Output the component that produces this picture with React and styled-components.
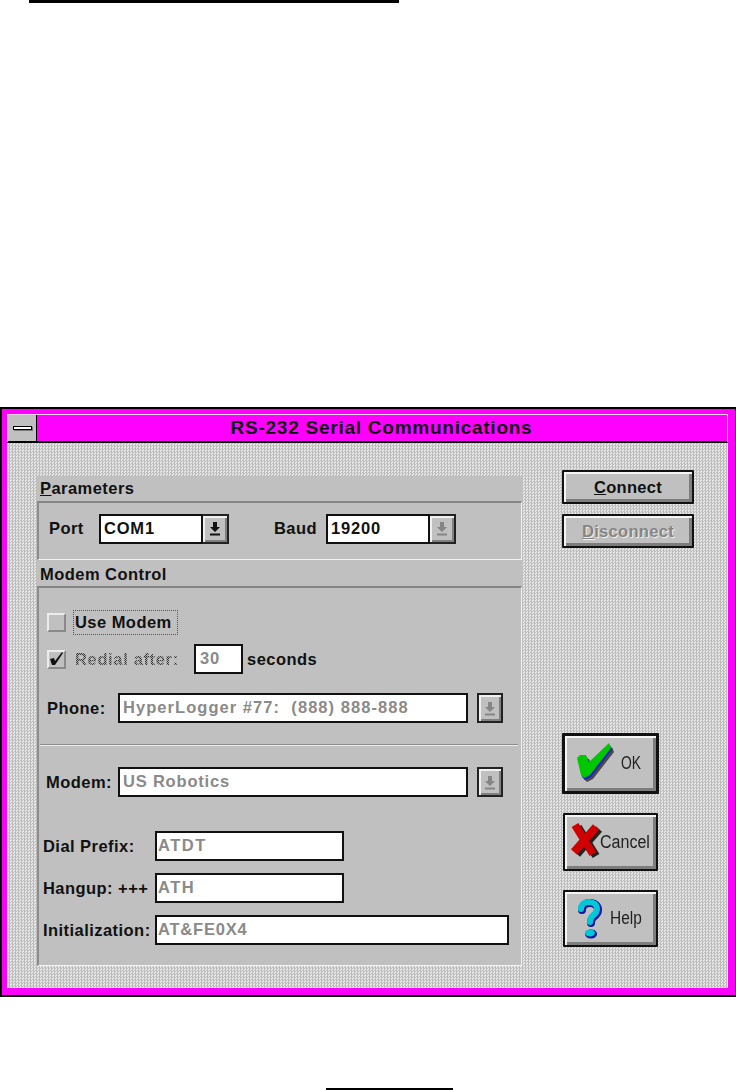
import React from "react";
import styled, { createGlobalStyle } from "styled-components";

const Global = createGlobalStyle`
    html, body {
        margin: 0;
        padding: 0;
        background: #fff;
    }
`;

const Page = styled.div`
    width: 736px;
    height: 1090px;
    overflow: hidden;
    display: flex;
    flex-direction: column;
    font-family: "Liberation Sans", Arial, sans-serif;
`;

const TopRule = styled.div`
    width: 370px;
    height: 3px;
    margin-left: 29px;
    background: #000;
`;

const BottomRule = styled.div`
    width: 127px;
    height: 2px;
    margin: 91px 0 0 326px;
    background: #000;
`;

const Window = styled.div`
    box-sizing: border-box;
    width: 736px;
    height: 590px;
    margin-top: 404px;
    padding: 5px 7px 7px 5px;
    border: 2px solid #000;
    border-right-width: 1px;
    background: #ff00ff;
    display: flex;
    flex-direction: column;
`;

const TitleBar = styled.div`
    height: 29px;
    flex: none;
    display: flex;
    border: 1px solid #f4d8f4;
    border-bottom: 2px solid #000;
    border-right-color: #f4d8f4;
    box-sizing: border-box;
`;

const SysBox = styled.div`
    width: 29px;
    flex: none;
    box-sizing: border-box;
    background: #c0c0c0;
    border-right: 1px solid #000;
    display: flex;
    align-items: center;
    justify-content: center;
`;

const SysDash = styled.div`
    width: 19px;
    height: 4px;
    box-sizing: border-box;
    background: #fff;
    border: 1px solid #000;
    box-shadow: 1px 1px 0 #777;
`;

const Title = styled.div`
    flex: 1;
    text-align: center;
    font-size: 19px;
    line-height: 26px;
    font-weight: bold;
    color: #111;
    padding-right: 1px;
    letter-spacing: 0.75px;
`;

const Body = styled.div`
    flex: 1;
    display: flex;
    padding: 33px 0 0 29px;
    background-color: #cfcfcf;
    background-image: repeating-conic-gradient(#bdbdbd 0 25%, #e6e6e6 0 50%);
    background-size: 3px 3px;
    border-left: 1px solid #f4f4f4;
    border-right: 1px solid #f4f4f4;
`;

const LeftCol = styled.div`
    width: 486px;
    flex: none;
    display: flex;
    flex-direction: column;
`;

const RightCol = styled.div`
    margin-left: 39px;
    width: 133px;
    display: flex;
    flex-direction: column;
    align-items: flex-start;
    margin-top: -6px;
`;

const GroupHead = styled.div`
    box-sizing: border-box;
    height: ${(p) => p.$h}px;
    padding: ${(p) => p.$pt || 0}px 0 0 3px;
    background: #c0c0c0;
    font-size: 16.5px;
    font-weight: bold;
    line-height: ${(p) => p.$h - (p.$pt || 0)}px;
    color: #111;
    letter-spacing: 0.45px;
`;

const GroupPanel = styled.div`
    box-sizing: border-box;
    width: 485px;
    height: ${(p) => p.$h}px;
    background: #c0c0c0;
    border-top: 2px solid #858585;
    border-left: 2px solid #8c8c8c;
    border-bottom: 1px solid #f2f2f2;
    border-right: 1px solid #f2f2f2;
    display: flex;
    flex-direction: column;
`;

const Row = styled.div`
    display: flex;
    align-items: center;
    height: ${(p) => p.$h}px;
    margin-top: ${(p) => p.$top || 0}px;
    padding-left: ${(p) => p.$left || 0}px;
`;

const Label = styled.span`
    box-sizing: border-box;
    width: ${(p) => (p.$w ? p.$w + "px" : "auto")};
    margin-left: ${(p) => p.$ml || 0}px;
    flex: none;
    font-size: 16.5px;
    font-weight: bold;
    color: #111;
    white-space: nowrap;
    letter-spacing: 0.45px;
`;

const Field = styled.div`
    box-sizing: border-box;
    width: ${(p) => p.$w}px;
    height: 30px;
    flex: none;
    margin-left: ${(p) => p.$ml || 0}px;
    padding-left: ${(p) => p.$pad || 3}px;
    background: #fff;
    border: 2px solid #111;
    font-size: 16.5px;
    font-weight: bold;
    line-height: 24px;
    letter-spacing: ${(p) => p.$ls || 0.8}px;
    color: ${(p) => (p.$dim ? "#8a8a8a" : "#111")};
    white-space: nowrap;
    overflow: hidden;
`;

const Combo = styled.div`
    display: flex;
    flex: none;
`;

const ArrowBtn = styled.div`
    box-sizing: border-box;
    width: 26px;
    height: 30px;
    flex: none;
    margin-left: ${(p) => p.$gap || 0}px;
    background: #c0c0c0;
    border: 2px solid #222;
    border-left-width: ${(p) => (p.$gap ? 2 : 0)}px;
    box-shadow: inset 2px 2px 0 #f0f0f0, inset -2px -2px 0 #808080;
    display: flex;
    align-items: center;
    justify-content: center;
`;

const CheckBox = styled.div`
    box-sizing: border-box;
    width: 19px;
    height: 19px;
    flex: none;
    background: #c0c0c0;
    border: 2px solid #ececec;
    border-right-color: #8a8a8a;
    border-bottom-color: #8a8a8a;
    display: flex;
    align-items: center;
    justify-content: center;
`;

const FocusLabel = styled(Label)`
    width: 105px;
    margin-left: 7px;
    padding: 3px 2px;
    outline: 1px dotted #555;
    outline-offset: -1px;
`;

const DisabledLabel = styled(Label)`
    width: 103px;
    margin-left: 9px;
    color: transparent;
    background-image: repeating-conic-gradient(#333 0 25%, #a8a8a8 0 50%);
    background-size: 2px 2px;
    -webkit-background-clip: text;
    background-clip: text;
    letter-spacing: 0.65px;
`;

const Separator = styled.div`
    height: 2px;
    margin: 21px 3px 0 1px;
    background: linear-gradient(#8c8c8c 50%, #ededed 50%);
`;

const PushButton = styled.div`
    box-sizing: border-box;
    width: ${(p) => p.$w}px;
    height: ${(p) => p.$h}px;
    margin-top: ${(p) => p.$top || 0}px;
    margin-left: ${(p) => p.$left || 0}px;
    background: #c0c0c0;
    border: ${(p) => (p.$default ? 3 : 2)}px solid #111;
    border-radius: 1px;
    box-shadow: inset 2px 2px 0 #f4f4f4, inset -3px -3px 0 #7d7d7d;
    display: flex;
    align-items: center;
    justify-content: ${(p) => p.$justify || "center"};
    padding-left: ${(p) => p.$pad || 0}px;
    font-size: 16.5px;
    font-weight: bold;
    letter-spacing: 0.3px;
    color: ${(p) => (p.$off ? "#858585" : "#111")};
    text-shadow: ${(p) => (p.$off ? "1px 1px 0 #eee" : "none")};
    white-space: nowrap;
`;

const Caption = styled.span`
    display: inline-block;
    flex: none;
    margin-left: ${(p) => p.$ml || 0}px;
    font-size: 18px;
    font-weight: normal;
    letter-spacing: 0;
    color: #222;
    transform: scaleX(${(p) => p.$sx});
    transform-origin: left center;
`;

const DownArrow = ({ dim }) => (
    <svg width="12" height="15" viewBox="0 0 12 15">
        <path d="M4 1h4v5h3L6 11 1 6h3z" fill={dim ? "#858585" : "#111"} />
        <rect x="1" y="12.5" width="10" height="2" fill={dim ? "#858585" : "#111"} />
    </svg>
);

const CheckMark = () => (
    <svg width="14" height="14" viewBox="0 0 14 14">
        <path d="M0 7l4-1 1 3 7-9 1 1-8 12H2z" fill="#111" />
    </svg>
);

const OkIcon = () => (
    <svg width="40" height="41" viewBox="0 0 40 41" style={{ flex: "none" }}>
        <path d="M1 15l3-3h6l3 7L33 0l2 5-21 27-6 3-3-3z" fill="#4a4a4a" transform="translate(3 4)" />
        <path d="M1 15l3-3h6l3 7L33 0l2 5-21 27-6 3-3-3z" fill="#1a22c8" transform="translate(1 2)" />
        <path d="M1 15l3-3h6l3 7L33 0l2 5-21 27-6 3-3-3z" fill="#00c800" />
    </svg>
);

const CancelIcon = () => (
    <svg width="34" height="40" viewBox="0 0 34 40" style={{ flex: "none" }}>
        <g fill="none" stroke="#222" strokeWidth="8" transform="translate(3 2)">
            <path d="M5 3l18 29" />
            <path d="M26 5L4 30" />
        </g>
        <g fill="none" stroke="#d00000" strokeWidth="8">
            <path d="M5 3l18 29" />
            <path d="M26 5L4 30" />
        </g>
    </svg>
);

const HelpIcon = () => (
    <svg width="26" height="42" viewBox="0 0 26 42" style={{ flex: "none" }}>
        <path
            d="M5 12c0-5 4-7 8-7 5 0 8 3 8 7 0 3-2 5-4 6.500-2 1.500-3 3-3 6.500"
            fill="none"
            stroke="#14149a"
            strokeWidth="8"
            strokeLinecap="round"
        />
        <ellipse cx="14" cy="36" rx="6" ry="4.500" fill="#14149a" />
        <path
            d="M4 11c0-5 4-7 8-7 5 0 8 3 8 7 0 3-2 5-4 6.500-2 1.500-3 3-3 6.500"
            fill="none"
            stroke="#00c8d8"
            strokeWidth="6"
            strokeLinecap="round"
        />
        <ellipse cx="13" cy="35" rx="5" ry="3.500" fill="#00c8d8" />
    </svg>
);

export default function App() {
    return (
        <Page>
            <Global />
            <TopRule />
            <Window>
                <TitleBar>
                    <SysBox>
                        <SysDash />
                    </SysBox>
                    <Title>RS-232 Serial Communications</Title>
                </TitleBar>
                <Body>
                    <LeftCol>
                        <GroupHead $h={25}>
                            <u>P</u>arameters
                        </GroupHead>
                        <GroupPanel $h={59}>
                            <Row $h={51} $left={10}>
                                <Label $w={50}>Port</Label>
                                <Combo>
                                    <Field $w={104}>COM1</Field>
                                    <ArrowBtn>
                                        <DownArrow />
                                    </ArrowBtn>
                                </Combo>
                                <Label $w={52} $ml={45}>
                                    Baud
                                </Label>
                                <Combo>
                                    <Field $w={104}>19200</Field>
                                    <ArrowBtn>
                                        <DownArrow dim />
                                    </ArrowBtn>
                                </Combo>
                            </Row>
                        </GroupPanel>
                        <GroupHead $h={26} $pt={3}>
                            Modem Control
                        </GroupHead>
                        <GroupPanel $h={380}>
                            <Row $h={24} $top={22} $left={8}>
                                <CheckBox />
                                <FocusLabel>Use Modem</FocusLabel>
                            </Row>
                            <Row $h={30} $top={10} $left={8}>
                                <CheckBox>
                                    <CheckMark />
                                </CheckBox>
                                <DisabledLabel>Redial after:</DisabledLabel>
                                <Field $w={49} $pad={4} $dim $ml={16}>
                                    30
                                </Field>
                                <Label $ml={4}>seconds</Label>
                            </Row>
                            <Row $h={30} $top={19} $left={8}>
                                <Label $w={71}>Phone:</Label>
                                <Field $w={350} $dim $ls={1.05}>
                                    HyperLogger #77:&nbsp; (888) 888-888
                                </Field>
                                <ArrowBtn $gap={9}>
                                    <DownArrow dim />
                                </ArrowBtn>
                            </Row>
                            <Separator />
                            <Row $h={30} $top={21} $left={7}>
                                <Label $w={72}>Modem:</Label>
                                <Field $w={350} $dim>
                                    US Robotics
                                </Field>
                                <ArrowBtn $gap={9}>
                                    <DownArrow dim />
                                </ArrowBtn>
                            </Row>
                            <Row $h={30} $top={34} $left={4}>
                                <Label $w={112}>Dial Prefix:</Label>
                                <Field $w={189} $pad={1} $dim $ls={1.5}>
                                    ATDT
                                </Field>
                            </Row>
                            <Row $h={30} $top={12} $left={4}>
                                <Label $w={112}>Hangup: +++</Label>
                                <Field $w={189} $pad={1} $dim $ls={1.5}>
                                    ATH
                                </Field>
                            </Row>
                            <Row $h={30} $top={12} $left={4}>
                                <Label $w={112}>Initialization:</Label>
                                <Field $w={354} $pad={1} $dim>
                                    AT&FE0X4
                                </Field>
                            </Row>
                        </GroupPanel>
                    </LeftCol>
                    <RightCol>
                        <PushButton $w={132} $h={34}>
                            <span>
                                <u>C</u>onnect
                            </span>
                        </PushButton>
                        <PushButton $w={132} $h={34} $top={10} $off>
                            <span>
                                <u>D</u>isconnect
                            </span>
                        </PushButton>
                        <PushButton $w={97} $h={61} $top={185} $default $justify="flex-start" $pad={11}>
                            <OkIcon />
                            <Caption $sx={0.77} $ml={5}>
                                OK
                            </Caption>
                        </PushButton>
                        <PushButton $w={95} $h={58} $top={19} $left={1} $justify="flex-start" $pad={5}>
                            <CancelIcon />
                            <Caption $sx={0.89} $ml={-4}>
                                Cancel
                            </Caption>
                        </PushButton>
                        <PushButton $w={95} $h={57} $top={19} $left={1} $justify="flex-start" $pad={12}>
                            <HelpIcon />
                            <Caption $sx={0.86} $ml={7}>
                                Help
                            </Caption>
                        </PushButton>
                    </RightCol>
                </Body>
            </Window>
            <BottomRule />
        </Page>
    );
}
